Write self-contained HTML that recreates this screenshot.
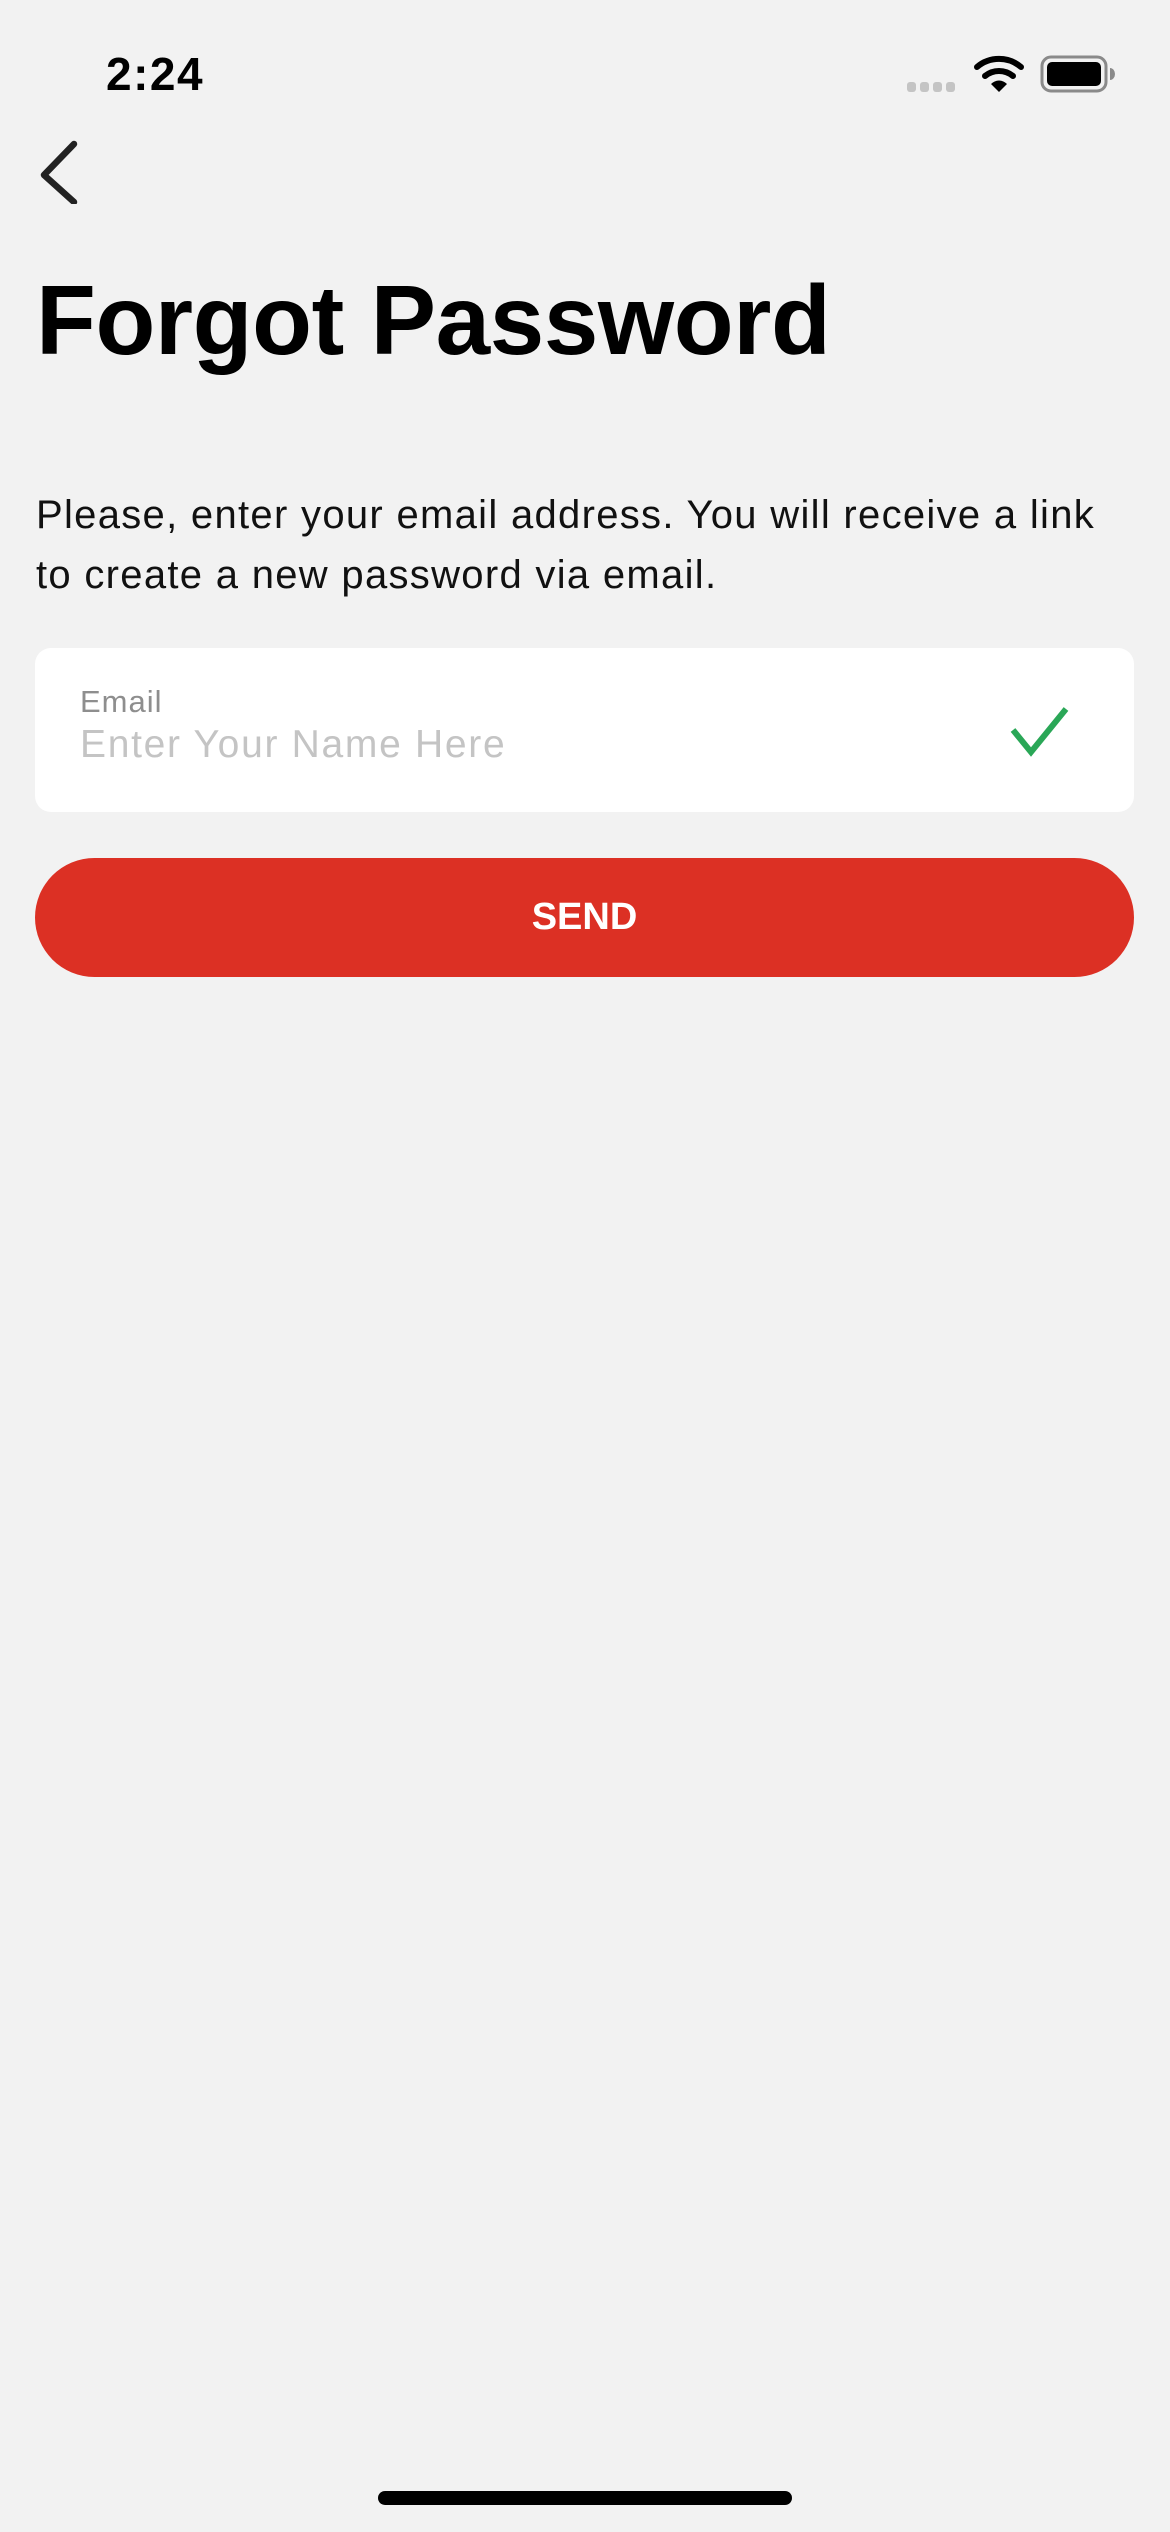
<!DOCTYPE html>
<html><head><meta charset="utf-8"><style>
body{margin:0;width:1170px;height:2532px;background:#f2f2f2;position:relative;overflow:hidden;font-family:"Liberation Sans",sans-serif;}
.a{position:absolute;white-space:nowrap;}
</style></head><body>
<div class="a" style="left:106px;top:47px;font-size:46px;font-weight:bold;color:#000;letter-spacing:1.5px;">2:24</div>
<svg class="a" style="left:900px;top:50px" width="230" height="50" viewBox="900 50 230 50">
<g fill="#c4c4c4"><rect x="907" y="82" width="9" height="10" rx="3"/><rect x="920" y="82" width="9" height="10" rx="3"/><rect x="933" y="82" width="9" height="10" rx="3"/><rect x="946" y="82" width="9" height="10" rx="3"/></g>
<g fill="none" stroke="#000" stroke-width="6" stroke-linecap="round"><path d="M977 67 A34 34 0 0 1 1021 67"/><path d="M985 76 A22 22 0 0 1 1013 76"/></g>
<path d="M991 84 A11 11 0 0 1 1007 84 L999 92 Z" fill="#000"/>
<rect x="1042" y="57" width="64" height="34" rx="9" fill="none" stroke="#8a8a8a" stroke-width="3"/>
<rect x="1047" y="62" width="54" height="24" rx="5" fill="#000"/>
<path d="M1110 68 a5 6 0 0 1 0 12 z" fill="#8a8a8a"/>
</svg>
<svg class="a" style="left:36px;top:138px" width="50" height="66"><path d="M38 6 L8 37 L38 64" fill="none" stroke="#222" stroke-width="6.5" stroke-linecap="round" stroke-linejoin="round"/></svg>
<div class="a" style="left:36px;top:264px;font-size:98px;font-weight:bold;color:#000;letter-spacing:-0.4px;">Forgot Password</div>
<div class="a" style="left:36px;top:485px;font-size:40px;color:#111;line-height:60px;letter-spacing:1.3px;">Please, enter your email address. You will receive a link<br>to create a new password via email.</div>
<div class="a" style="left:35px;top:648px;width:1099px;height:164px;background:#fff;border-radius:16px;"></div>
<div class="a" style="left:80px;top:684px;font-size:31px;color:#8e8e8e;letter-spacing:1px;">Email</div>
<div class="a" style="left:80px;top:723px;font-size:39px;color:#c4c4c4;letter-spacing:1.7px;">Enter Your Name Here</div>
<svg class="a" style="left:1005px;top:700px" width="70" height="62"><path d="M8 30 L26 52 L61 9" fill="none" stroke="#2aa757" stroke-width="6"/></svg>
<div class="a" style="left:35px;top:858px;width:1099px;height:119px;background:#dc3024;border-radius:60px;color:#fff;font-size:38px;font-weight:bold;text-align:center;line-height:119px;">SEND</div>
<div class="a" style="left:378px;top:2491px;width:414px;height:14px;border-radius:7px;background:#000;"></div>
</body></html>
